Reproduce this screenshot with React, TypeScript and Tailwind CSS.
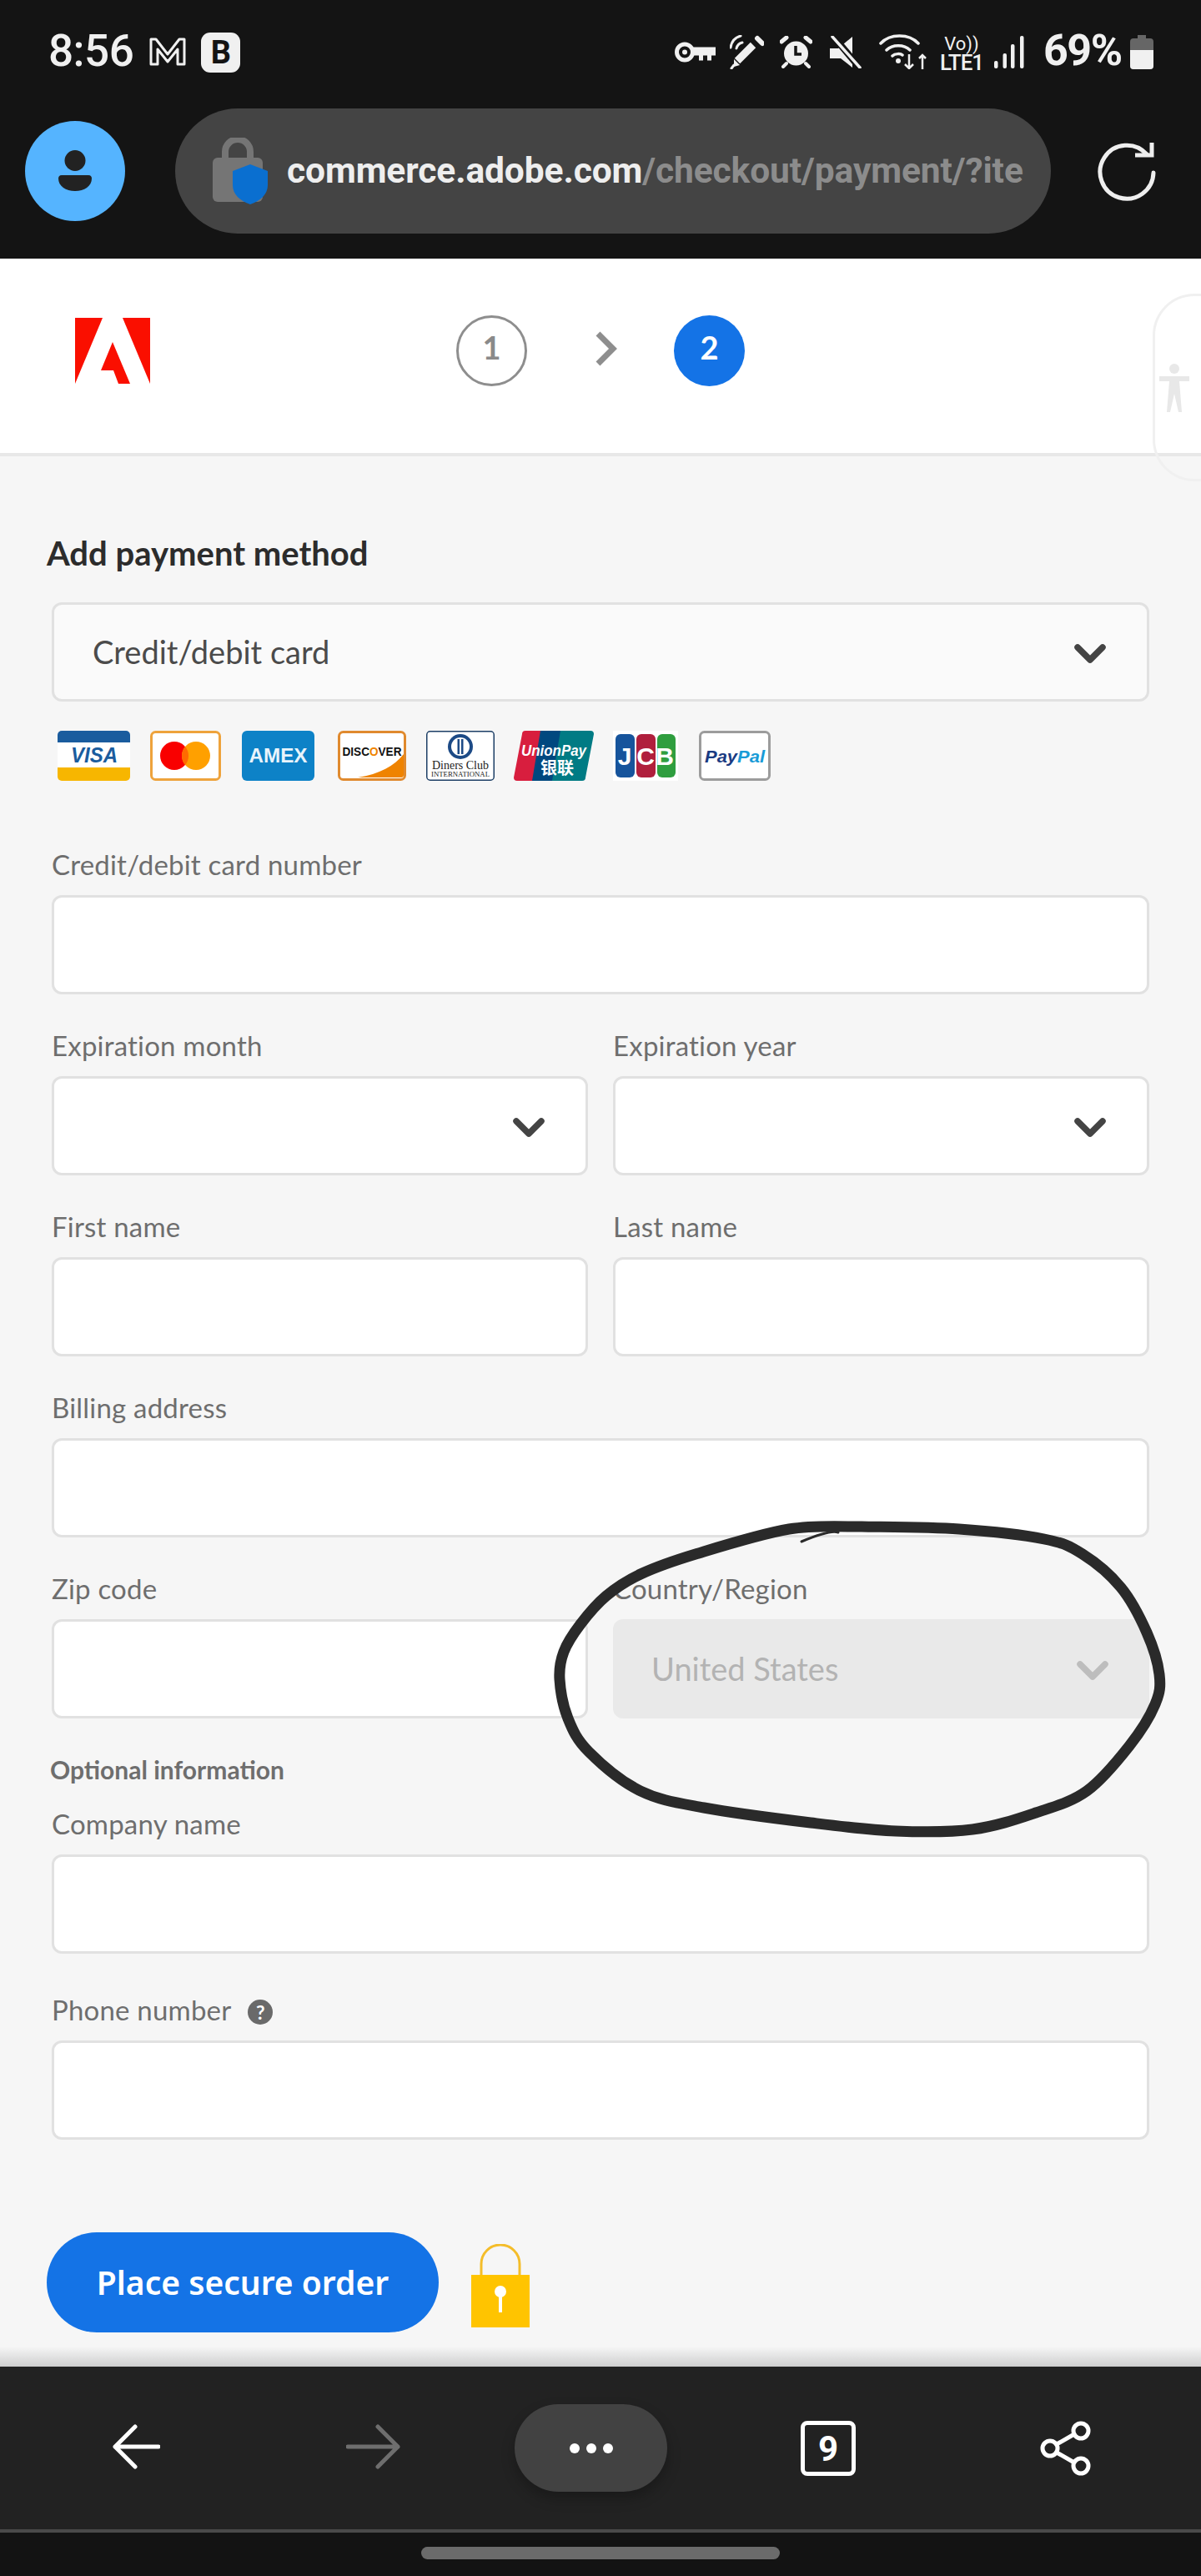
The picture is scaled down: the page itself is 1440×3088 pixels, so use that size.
import React from "react";

const pts: [number, number][] = [[1033,1830],[1150,1833],[1252,1845],[1298,1863],[1344,1903],[1375,1957],[1390,2007],[1385,2043],[1354,2093],[1303,2147],[1242,2173],[1166,2193],[1074,2195],[972,2185],[844,2167],[768,2147],[706,2100],[681,2060],[671,2013],[676,1980],[696,1947],[727,1913],[768,1887],[834,1863],[946,1833],[1033,1830]];
function smooth(p: [number, number][]) {
  let d = `M${p[0][0]} ${p[0][1]}`;
  for (let i = 0; i < p.length - 1; i++) {
    const a = p[Math.max(i - 1, 0)], b = p[i], c = p[i + 1], e = p[Math.min(i + 2, p.length - 1)];
    d += ` C${b[0] + (c[0] - a[0]) / 6} ${b[1] + (c[1] - a[1]) / 6} ${c[0] - (e[0] - b[0]) / 6} ${c[1] - (e[1] - b[1]) / 6} ${c[0]} ${c[1]}`;
  }
  return d;
}

const Chevron = ({ color = "#444" }: { color?: string }) => (
  <svg className="mt-[4px]" width="38" height="26" viewBox="0 0 38 26" fill="none"><path d="M4 5l15 15L34 5" stroke={color} strokeWidth="7.500" strokeLinecap="round" strokeLinejoin="round" /></svg>
);

const Label = ({ children }: { children: React.ReactNode }) => (
  <div className="h-[44px] mb-[14px] flex items-center text-[33px] text-[#6e6e6e] font-['Lato',sans-serif] tracking-[0.2px]">{children}</div>
);
const Box = ({ children }: { children?: React.ReactNode }) => (
  <div className="h-[119px] rounded-[12px] border-[3px] border-[#e1e1e1] bg-white flex items-center justify-between pl-[46px] pr-[49px]">{children}</div>
);
const Field = ({ label, select }: { label: React.ReactNode; select?: boolean }) => (
  <div>
    <Label>{label}</Label>
    <Box>{select ? <><span /><Chevron /></> : null}</Box>
  </div>
);

const Cards = () => (
  <div className="flex h-[60px] mt-[35px] ml-[7px] font-['Liberation_Sans',sans-serif]">
    <svg width="87" height="60" viewBox="0 0 87 60"><rect width="87" height="60" rx="5" fill="#fff" /><path d="M0 14V5a5 5 0 015-5h77a5 5 0 015 5v9z" fill="#1a5c9e" /><path d="M0 44h87v11a5 5 0 01-5 5H5a5 5 0 01-5-5z" fill="#f7b600" /><text x="44" y="38" textAnchor="middle" fontSize="25" fontWeight="700" fontStyle="italic" fill="#1a5c9e" textLength="56" lengthAdjust="spacingAndGlyphs">VISA</text></svg>
    <svg className="ml-[24px]" width="85" height="60" viewBox="0 0 85 60"><rect x="1.500" y="1.500" width="82" height="57" rx="5" fill="#fff" stroke="#eea33c" strokeWidth="3" /><circle cx="29" cy="30" r="17" fill="#f90000" /><circle cx="55" cy="30" r="17" fill="#ffa000" /><path d="M42 19a17 17 0 010 22a17 17 0 010-22z" fill="#ff6a00" /></svg>
    <svg className="ml-[25px]" width="87" height="60" viewBox="0 0 87 60"><rect width="87" height="60" rx="6" fill="#0d82c7" /><text x="43.500" y="38" textAnchor="middle" fontSize="23" fontWeight="700" fill="#e8f4fb" textLength="70" lengthAdjust="spacingAndGlyphs">AMEX</text></svg>
    <svg className="ml-[28px]" width="82" height="60" viewBox="0 0 82 60"><rect x="1.500" y="1.500" width="79" height="57" rx="5" fill="#fff" stroke="#e08a2e" strokeWidth="3" /><path d="M24 56C50 52 68 42 79 28v25a3 3 0 01-3 3z" fill="#ef8300" /><text x="41" y="30" textAnchor="middle" fontSize="15" fontWeight="700" fill="#111" textLength="71" lengthAdjust="spacingAndGlyphs">DISC<tspan fill="#ef8300">O</tspan>VER</text></svg>
    <svg className="ml-[24px]" width="82" height="60" viewBox="0 0 82 60"><rect x="0.750" y="0.750" width="80.500" height="58.500" rx="4" fill="#fff" stroke="#1d3f66" strokeWidth="1.500" /><circle cx="41" cy="19" r="15" fill="#1c4a86" /><circle cx="41" cy="19" r="11" fill="#fff" /><rect x="37.500" y="10" width="2.500" height="18" fill="#1c4a86" /><rect x="42" y="10" width="2.500" height="18" fill="#1c4a86" /><text x="41" y="46" textAnchor="middle" fontSize="15" fill="#222" fontFamily="'Liberation Serif',serif" textLength="68" lengthAdjust="spacingAndGlyphs">Diners Club</text><text x="41" y="55" textAnchor="middle" fontSize="7.500" fill="#222" fontFamily="'Liberation Serif',serif" textLength="70" lengthAdjust="spacingAndGlyphs">INTERNATIONAL</text></svg>
    <svg className="ml-[23px]" width="96" height="60" viewBox="0 0 96 60"><path d="M14 0h30L34 60H4a4 4 0 01-4-4L10 4a4 4 0 014-4z" fill="#d81e3e" /><path d="M32 0h34L56 60H22z" fill="#00487f" /><path d="M56 0h36a4 4 0 014 4L86 56a4 4 0 01-4 4H46z" fill="#007b84" /><text x="48" y="30" textAnchor="middle" fontSize="19" fontWeight="700" fontStyle="italic" fill="#fff" textLength="78" lengthAdjust="spacingAndGlyphs">UnionPay</text><text x="52" y="52" textAnchor="middle" fontSize="20" fontWeight="700" fill="#fff" fontFamily="'Noto Sans CJK SC',sans-serif">银联</text></svg>
    <svg className="ml-[23px]" width="78" height="60" viewBox="0 0 78 60"><rect width="78" height="60" fill="#fff" /><rect x="3" y="4" width="23" height="52" rx="6" fill="#16549c" /><rect x="28" y="4" width="23" height="52" rx="6" fill="#b01f3d" /><rect x="53" y="4" width="22" height="52" rx="6" fill="#2f9e3f" /><text x="14" y="41" textAnchor="middle" fontSize="30" fontWeight="700" fill="#fff">J</text><text x="39" y="41" textAnchor="middle" fontSize="30" fontWeight="700" fill="#fff">C</text><text x="62" y="41" textAnchor="middle" fontSize="30" fontWeight="700" fill="#fff">B</text></svg>
    <svg className="ml-[25px]" width="86" height="60" viewBox="0 0 86 60"><rect x="1.500" y="1.500" width="83" height="57" rx="5" fill="#fff" stroke="#9c9c9c" strokeWidth="3" /><text x="43" y="38" textAnchor="middle" fontSize="21" fontWeight="700" fontStyle="italic" fill="#1a3b82" textLength="72" lengthAdjust="spacingAndGlyphs">Pay<tspan fill="#189bd7">Pal</tspan></text></svg>
  </div>
);

const StatusBar = () => (
  <div className="h-[130px] flex items-start pt-[36px] text-[#f0f0f0] font-['Roboto',sans-serif]">
    <span className="ml-[58px] text-[53px] leading-[50px] font-medium tracking-[-0.5px] whitespace-nowrap">8:56</span>
    <svg className="ml-[18px] mt-[6px]" width="46" height="38" viewBox="0 0 46 38" fill="none"><path d="M3 35V5h6l14 18L37 5h6v30h-8V17L23 32 11 17v18z" stroke="#f0f0f0" strokeWidth="3" strokeLinejoin="round" /></svg>
    <div className="ml-[17px] mt-[3px] w-[47px] h-[48px] rounded-[11px] bg-[#f0f0f0] flex items-center justify-center text-[#141414] text-[38px] leading-none font-bold">B</div>
    <svg className="ml-auto mt-[14px]" width="49" height="25" viewBox="0 0 49 25" fill="none"><circle cx="12" cy="12.500" r="9.500" stroke="#f0f0f0" strokeWidth="5" /><circle cx="12" cy="12.500" r="3" fill="#f0f0f0" /><path d="M21 6.500h28v10h-5v6h-5v-6h-5v6h-5v-6h-8z" fill="#f0f0f0" /></svg>
    <svg className="ml-[17px] mt-[6px]" width="41" height="41" viewBox="0 0 41 41" fill="none"><path d="M9 31L28 12" stroke="#f0f0f0" strokeWidth="9" /><path d="M5 36l-3 4" stroke="#f0f0f0" strokeWidth="3" strokeLinecap="round" /><path d="M5 29l7 7-7 2z" fill="#f0f0f0" /><path d="M33 4l6 6" stroke="#f0f0f0" strokeWidth="6" strokeLinecap="round" /><path d="M1 15C2 8 6 3 13 1M8 16C9 12 11 10 15 9" stroke="#f0f0f0" strokeWidth="3" strokeLinecap="round" /></svg>
    <svg className="ml-[19px] mt-[7px]" width="39" height="39" viewBox="0 0 39 39"><circle cx="19.500" cy="21" r="14.500" fill="#f0f0f0" /><path d="M19 12v10h7" stroke="#141414" strokeWidth="3.500" fill="none" /><path d="M2 7l6-5M37 7l-6-5" stroke="#f0f0f0" strokeWidth="5" strokeLinecap="round" /><path d="M4 37l4-4M35 37l-4-4" stroke="#f0f0f0" strokeWidth="4" strokeLinecap="round" /></svg>
    <svg className="ml-[21px] mt-[7px]" width="39" height="39" viewBox="0 0 39 39"><path d="M27 1v37L13 27H0V15h10z" fill="#f0f0f0" /><path d="M3 -1L38 41" stroke="#141414" strokeWidth="8" /><path d="M3 1l33 37" stroke="#f0f0f0" strokeWidth="3.500" strokeLinecap="round" /></svg>
    <svg className="ml-[20px] mt-[4px]" width="57" height="43" viewBox="0 0 57 43" fill="none"><path d="M2 12C13 0 36 0 47 12M9 20C16 13 30 13 37 20M16 27C19 24 26 24 28 26" stroke="#f0f0f0" strokeWidth="3.500" strokeLinecap="round" /><circle cx="23" cy="33" r="3" fill="#f0f0f0" /><path d="M36 25v17m-5-5l5 5 5-5M52 43V26m-4 4l4-4 4 4" stroke="#f0f0f0" strokeWidth="2.500" /></svg>
    <div className="ml-[17px] mt-[6px] w-[50px] flex flex-col items-center text-[22px] leading-[22px] font-normal whitespace-nowrap"><span>Vo))</span><span className="text-[26px] tracking-[-1px] font-medium">LTE1</span></div>
    <svg className="ml-[14px] mt-[7px]" width="36" height="39" viewBox="0 0 36 39" fill="#f0f0f0"><rect x="0" y="30" width="4.500" height="9" rx="2" /><rect x="10.500" y="21" width="4.500" height="18" rx="2" /><rect x="20" y="10" width="4.500" height="29" rx="2" /><rect x="31" y="0" width="4.500" height="39" rx="2" /></svg>
    <span className="ml-[23px] w-[95px] text-[52px] leading-[50px] font-bold whitespace-nowrap tracking-[-1.500px]">69%</span>
    <svg className="ml-[9px] mr-[57px] mt-[6px]" width="28" height="41" viewBox="0 0 28 41"><path d="M9 0h10v4h5a4 4 0 014 4v29a4 4 0 01-4 4H4a4 4 0 01-4-4V8a4 4 0 014-4h5z" fill="#666" /><path d="M0 18h28v19a4 4 0 01-4 4H4a4 4 0 01-4-4z" fill="#f0f0f0" /></svg>
  </div>
);

const AddressBar = () => (
  <div className="flex items-center h-[150px]">
    <div className="ml-[30px] w-[120px] h-[120px] rounded-full bg-[#55b4ff] flex items-center justify-center">
      <svg width="40" height="50" viewBox="0 0 40 50"><circle cx="20" cy="12.500" r="12.500" fill="#222" /><path d="M4 30h32c3 0 4 2 4 4 0 9-9 15-20 15S0 43 0 34c0-2 1-4 4-4z" fill="#222" /></svg>
    </div>
    <div className="ml-[60px] w-[1050px] h-[150px] rounded-full bg-[#444444] flex items-center pl-[45px] font-['Roboto',sans-serif] text-[42.500px] font-bold whitespace-nowrap overflow-hidden tracking-[-0.1px]">
      <svg className="shrink-0" width="68" height="80" viewBox="0 0 68 80"><path d="M15 28V17a15 15 0 0130 0v11" fill="none" stroke="#757575" strokeWidth="8" /><rect x="0" y="24" width="60" height="53" rx="6" fill="#757575" /><path d="M45 32l21 8v17c0 11-9 19-21 23-12-4-21-12-21-23V40z" fill="#0a6fd0" /></svg>
      <span className="ml-[21px] text-[#eeeeee]">commerce.adobe.com</span><span className="text-[#8c8c8c]">/checkout/payment/?ite</span>
    </div>
    <svg className="ml-[55px]" width="72" height="72" viewBox="0 0 72 72" fill="none"><path d="M60 16A32 32 0 1 0 68 38" stroke="#eee" strokeWidth="5" strokeLinecap="round" /><path d="M46 17h20V2" stroke="#eee" strokeWidth="5" /></svg>
  </div>
);

const Header = () => (
  <div className="relative h-[237px] shrink-0 bg-white border-b-[4px] border-[#e8e8e8] flex items-start pt-[68px]">
    <svg className="ml-[90px] mt-[3px]" width="90" height="79" viewBox="0 0 90 79" fill="#fa0f00"><path d="M0 0h33L0 79z" /><path d="M57 0h33v79z" /><path d="M45 29l21 50H52l-6-16H31z" /></svg>
    <div className="ml-[367px] w-[85px] h-[85px] rounded-full border-[3px] border-[#8e8e8e] flex items-center justify-center text-[#8a8a8a] text-[38px] font-bold font-['Lato',sans-serif] pb-[8px]">1</div>
    <svg className="ml-[80px] mt-[19px]" width="30" height="42" viewBox="0 0 30 42" fill="none"><path d="M5 3l18 18L5 39" stroke="#8e8e8e" strokeWidth="7" /></svg>
    <div className="ml-[66px] w-[85px] h-[85px] rounded-full bg-[#1473e6] flex items-center justify-center text-white text-[38px] font-bold font-['Lato',sans-serif] pb-[8px]">2</div>
  </div>
);

const BottomNav = () => (
  <div className="shrink-0 relative">
    <div className="absolute left-0 right-0 -top-[24px] h-[24px] bg-gradient-to-b from-[#f6f6f6] to-[#cfcfcf]" />
    <div className="h-[199px] bg-[#222222] border-b-[4px] border-[#4a4a4a] flex items-start">
      <svg className="ml-[134px] mt-[69px]" width="58" height="54" viewBox="0 0 58 54" fill="none"><path d="M56 27H4M28 3L4 27l24 24" stroke="#fff" strokeWidth="5" strokeLinecap="round" strokeLinejoin="round" /></svg>
      <svg className="ml-[223px] mt-[69px]" width="66" height="54" viewBox="0 0 66 54" fill="none"><path d="M2 27h60M38 3l24 24-24 24" stroke="#6e6e6e" strokeWidth="5" strokeLinecap="round" strokeLinejoin="round" /></svg>
      <div className="ml-[136px] mt-[45px] w-[183px] h-[105px] rounded-full bg-[#424242] shadow-[0_8px_16px_rgba(0,0,0,0.25)] flex items-center justify-center gap-[8px]">
        <span className="w-[12px] h-[12px] rounded-full bg-white" /><span className="w-[12px] h-[12px] rounded-full bg-white" /><span className="w-[12px] h-[12px] rounded-full bg-white" />
      </div>
      <div className="ml-[160px] mt-[65px] w-[66px] h-[66px] rounded-[8px] border-[5px] border-white flex items-center justify-center text-white text-[42px] font-bold font-['Roboto',sans-serif]">9</div>
      <svg className="ml-[221px] mt-[65px]" width="62" height="66" viewBox="0 0 62 66" fill="none" stroke="#fff" strokeWidth="5"><circle cx="12" cy="33" r="9" /><circle cx="49" cy="12" r="9" /><circle cx="49" cy="54" r="9" /><path d="M20 28l21-12M20 38l21 12" /></svg>
    </div>
    <div className="h-[52px] bg-[#131313] flex justify-center pt-[17px]">
      <div className="w-[430px] h-[15px] rounded-full bg-[#6b6b6b]" />
    </div>
  </div>
);

export default function App() {
  return (
    <div className="relative w-[1440px] h-[3088px] overflow-hidden flex flex-col bg-[#f6f6f6] font-['Lato',sans-serif]">
      <div className="bg-[#141414] h-[310px] shrink-0">
        <StatusBar />
        <AddressBar />
      </div>
      <Header />
      <main className="flex-1 px-[62px]">
        <div className="-ml-[6px] mt-[93px] h-[46px] flex items-center text-[40px] font-bold text-[#2c2c2c]">Add payment method</div>
        <div className="mt-[36px] h-[119px] rounded-[12px] border-[3px] border-[#e1e1e1] bg-[#fafafa] flex items-center justify-between pl-[46px] pr-[49px] text-[38px] text-[#4b4b4b]">
          Credit/debit card<Chevron />
        </div>
        <Cards />
        <div className="mt-[79px] flex flex-col gap-[40px]">
          <Field label="Credit/debit card number" />
          <div className="grid grid-cols-2 gap-x-[30px]">
            <Field label="Expiration month" select />
            <Field label="Expiration year" select />
          </div>
          <div className="grid grid-cols-2 gap-x-[30px]">
            <Field label="First name" />
            <Field label="Last name" />
          </div>
          <Field label="Billing address" />
          <div className="grid grid-cols-2 gap-x-[30px]">
            <Field label="Zip code" />
            <div>
              <Label>Country/Region</Label>
              <div className="h-[119px] rounded-[12px] bg-[#e9e9e9] flex items-center justify-between pl-[46px] pr-[49px] text-[38px] text-[#b3b3b3]">
                United States<Chevron color="#bdbdbd" />
              </div>
            </div>
          </div>
        </div>
        <div className="-ml-[2px] mt-[41px] h-[40px] flex items-center text-[30px] font-bold text-[#6e6e6e]">Optional information</div>
        <div className="mt-[24px]"><Field label="Company name" /></div>
        <div className="mt-[46px]">
          <Field label={<>Phone number<span className="ml-[20px] mt-[4px] w-[30px] h-[30px] rounded-full bg-[#6a6a6a] text-white text-[23px] font-bold flex items-center justify-center">?</span></>} />
        </div>
        <div className="-ml-[6px] mt-[111px] flex items-start">
          <button className="w-[470px] h-[120px] rounded-full bg-[#1473e6] text-white text-[39px] font-['Noto_Sans',sans-serif] font-semibold">Place secure order</button>
          <svg className="ml-[39px] mt-[14px]" width="70" height="100" viewBox="0 0 70 100" fill="none"><path d="M12 40V24a23 23 0 0146 0v16" stroke="#f4bd2a" strokeWidth="3" /><rect x="0" y="37" width="70" height="63" fill="#ffc400" /><circle cx="35" cy="57" r="7" fill="#fff" /><rect x="33" y="60" width="4" height="22" fill="#fff" /></svg>
        </div>
      </main>
      <BottomNav />

      <div className="absolute right-0 top-[352px] w-[58px] h-[225px] rounded-l-[50px] border-[3px] border-r-0 border-[#f0f0f0] flex items-center justify-center pr-[10px]">
        <svg width="36" height="58" viewBox="0 0 36 58" fill="#e8e8e8"><circle cx="18" cy="6" r="6" /><path d="M0 15h36v6H24l3 37h-4l-5-22-5 22H9l3-37H0z" /></svg>
      </div>
      <svg className="absolute left-0 top-0 pointer-events-none" width="1440" height="3088" viewBox="0 0 1440 3088" fill="none">
        <path d={smooth(pts)} stroke="#2a2a2a" strokeWidth="13" strokeLinecap="round" />
        <path d="M961 1848C985 1838 1000 1835 1005 1837" stroke="#2a2a2a" strokeWidth="3" strokeLinecap="round" />
      </svg>
    </div>
  );
}
